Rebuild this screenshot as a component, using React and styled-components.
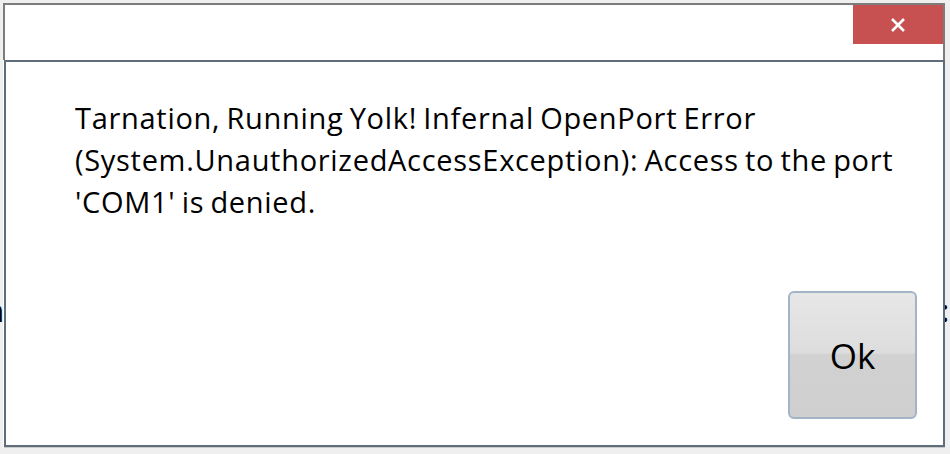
import styled, { createGlobalStyle } from "styled-components";

const GlobalStyle = createGlobalStyle`
  html, body {
    margin: 0;
    padding: 0;
    background: #efefef;
  }
  body {
    font-family: "Open Sans", "Noto Sans", sans-serif;
  }
`;

export default function App() {
  return (
    <>
      <GlobalStyle />
      <Stage>
        <Backdrop>
          <BehindText $side="left">n</BehindText>
          <BehindText $side="right">:</BehindText>
        </Backdrop>
        <Window>
          <TitleBar>
            <CloseButton aria-label="Close">
              <svg width="16" height="16" viewBox="0 0 16 16">
                <path
                  d="M2 2 L14 14 M14 2 L2 14"
                  stroke="#ffffff"
                  strokeWidth="2.6"
                  fill="none"
                />
              </svg>
            </CloseButton>
          </TitleBar>
          <Dialog>
            <Message>
              Tarnation, Running Yolk! Infernal OpenPort Error
              (System.UnauthorizedAccessException): Access to the port 'COM1'
              is denied.
            </Message>
            <ButtonRow>
              <OkButton>Ok</OkButton>
            </ButtonRow>
          </Dialog>
        </Window>
      </Stage>
    </>
  );
}

const Stage = styled.div`
  display: grid;
  width: 950px;
  height: 454px;
  overflow: hidden;
`;

const Backdrop = styled.div`
  grid-area: 1 / 1;
  display: flex;
  justify-content: space-between;
  align-items: flex-start;
  padding-top: 290px;
  font-family: "Open Sans", "Noto Sans", sans-serif;
  font-size: 30px;
  font-weight: 600;
  color: #000;
`;

const BehindText = styled.span`
  display: block;
  margin-left: ${(p) => (p.$side === "left" ? "-15px" : "0")};
  margin-right: ${(p) => (p.$side === "right" ? "1px" : "0")};
`;

const Window = styled.div`
  grid-area: 1 / 1;
  position: relative;
  display: flex;
  flex-direction: column;
  margin: 3px 5px 7px 3px;
  background: #ffffff;
`;

const TitleBar = styled.div`
  display: flex;
  justify-content: flex-end;
  align-items: flex-start;
  height: 55px;
  border: 2px solid #7c7c7c;
  border-bottom: none;
  background: #ffffff;
`;

const CloseButton = styled.button`
  display: flex;
  align-items: center;
  justify-content: center;
  width: 90px;
  height: 39px;
  padding: 0;
  border: none;
  background: #c75050;
  cursor: pointer;
`;

const Dialog = styled.div`
  flex: 1;
  display: flex;
  flex-direction: column;
  justify-content: space-between;
  margin-left: 1px;
  border: 2px solid #5f6d7b;
  box-shadow: 0 1px 0 #c9c9c9;
  background: #ffffff;
`;

const Message = styled.p`
  margin: 0;
  padding: 35px 20px 0 69px;
  font-size: 29px;
  line-height: 42px;
  letter-spacing: 0.7px;
  word-spacing: -2px;
  color: #000;
`;

const ButtonRow = styled.div`
  display: flex;
  justify-content: flex-end;
  padding: 0 26px 26px 0;
`;

const OkButton = styled.button`
  width: 129px;
  height: 128px;
  border: 2px solid #a3b4c7;
  border-radius: 6px;
  background: linear-gradient(
    to bottom,
    #e7e7e7 0%,
    #dddddd 48%,
    #d1d1d1 50%,
    #cfcfcf 100%
  );
  font-family: "Open Sans", "Noto Sans", sans-serif;
  font-size: 35px;
  color: #000;
  cursor: pointer;
`;
